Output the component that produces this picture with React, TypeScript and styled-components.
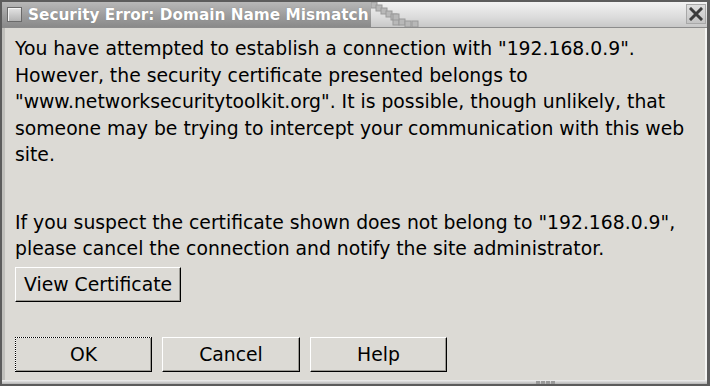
import React from "react";
import styled, { createGlobalStyle } from "styled-components";

const GlobalStyle = createGlobalStyle`
    html, body {
        margin: 0;
        padding: 0;
        background: #5c5c5c;
    }
    body {
        font-family: "DejaVu Sans", "Liberation Sans", sans-serif;
    }
`;

const Window = styled.div`
    width: 710px;
    height: 386px;
    box-sizing: border-box;
    display: flex;
    flex-direction: column;
    background: #5c5c5c;
    padding: 2px 3px 2px 2px;
`;

const TitleBar = styled.div`
    height: 25px;
    display: flex;
    align-items: stretch;
    background: linear-gradient(#f2f2f2, #dcdcdc 60%, #c8c8c8);
    border-bottom: 1px solid #8c8c8c;
`;

const TitleActive = styled.div`
    display: flex;
    align-items: center;
    gap: 6px;
    padding: 0 2px 0 5px;
    background: linear-gradient(#b8b8b8, #9c9c9c 55%, #8a8a8a);
`;

const MenuBox = styled.div`
    width: 15px;
    height: 15px;
    box-sizing: border-box;
    border: 1px solid #6a6a6a;
    background: linear-gradient(#e4e4e4, #b4b4b4);
    box-shadow: inset 1px 1px 0 #f4f4f4;
`;

const TitleText = styled.span`
    color: #ffffff;
    font-weight: bold;
    font-size: 15.3px;
    white-space: nowrap;
    text-shadow: 0 0 1px #7a7a7a;
`;

const TitleFill = styled.div`
    flex: 1;
`;

const CloseButton = styled.div`
    width: 20px;
    height: 20px;
    margin: 2px 1px 0 0;
    box-sizing: border-box;
    border: 1px solid #a8a8a8;
    background: linear-gradient(#dedede, #c4c4c4);
    display: flex;
    align-items: center;
    justify-content: center;
`;

const Body = styled.div`
    flex: 1;
    display: flex;
    flex-direction: column;
    background: #dcdad5;
    border-left: 3px solid #c0bfbb;
    border-right: 2px solid #f4f4f2;
    padding: 8px 10px 8px 10px;
    color: #000;
    font-size: 18.8px;
    line-height: 26.5px;
`;

const Paragraph = styled.p<{ $gap: number }>`
    margin: 0 0 ${(p) => p.$gap}px 0;
    white-space: nowrap;
`;

const Button = styled.button<{ $width?: number; $focused?: boolean }>`
    width: ${(p) => (p.$width ? `${p.$width}px` : "auto")};
    height: 35px;
    padding: 0 8px;
    font-family: "DejaVu Sans", "Liberation Sans", sans-serif;
    font-size: 18.8px;
    color: #000;
    background: #dcdad5;
    border: 1px solid;
    border-color: #ffffff #000000 #000000 #ffffff;
    box-shadow: inset -1px -1px 0 #9c9a94;
    outline: ${(p) => (p.$focused ? "1px dotted #000" : "none")};
    outline-offset: -1px;
`;

const CertRow = styled.div`
    display: flex;
    margin-top: 4px;
`;

const ButtonRow = styled.div`
    display: flex;
    gap: 10px;
    margin-top: auto;
`;

const BottomFrame = styled.div`
    height: 4px;
    display: flex;
    align-items: center;
    justify-content: flex-start;
    background: linear-gradient(#f0f0f0, #b4b4b4);
    padding-left: 534px;
`;

const Grip = styled.div`
    display: flex;
    gap: 1px;
    span {
        width: 4px;
        height: 3px;
        background: #9a9a9a;
        border: 0;
    }
`;

const Stairs = () => (
    <svg width="60" height="25" viewBox="0 0 60 25">
        <defs>
            <linearGradient id="fade" x1="0" y1="0" x2="0" y2="1">
                <stop offset="0" stopColor="#f2f2f2" />
                <stop offset="0.6" stopColor="#dcdcdc" />
                <stop offset="1" stopColor="#c8c8c8" />
            </linearGradient>
        </defs>
        <rect x="0" y="0" width="60" height="25" fill="url(#fade)" />
        {[
            [0, 0],
            [5, 3],
            [10, 6],
            [15, 9],
            [20, 12],
            [22, 17],
            [28, 17],
            [22, 12],
            [34, 19],
            [41, 19],
        ].map(([x, y], i) => (
            <rect
                key={i}
                x={x}
                y={y}
                width="6"
                height="6"
                fill="#b8b8b8"
                stroke="#9a9a9a"
                strokeWidth="1"
            />
        ))}
    </svg>
);

const App = () => {
    return (
        <>
            <GlobalStyle />
            <Window>
                <TitleBar>
                    <TitleActive>
                        <MenuBox />
                        <TitleText>Security Error: Domain Name Mismatch</TitleText>
                    </TitleActive>
                    <Stairs />
                    <TitleFill />
                    <CloseButton>
                        <svg width="14" height="14" viewBox="0 0 14 14">
                            <path
                                d="M2 2 L12 12 M12 2 L2 12"
                                stroke="#3c3c3c"
                                strokeWidth="3"
                                strokeLinecap="square"
                            />
                        </svg>
                    </CloseButton>
                </TitleBar>
                <Body>
                    <Paragraph $gap={41}>
                        You have attempted to establish a connection with "192.168.0.9".
                        <br />
                        However, the security certificate presented belongs to
                        <br />
                        "www.networksecuritytoolkit.org". It is possible, though unlikely, that
                        <br />
                        someone may be trying to intercept your communication with this web
                        <br />
                        site.
                    </Paragraph>
                    <Paragraph $gap={0}>
                        If you suspect the certificate shown does not belong to "192.168.0.9",
                        <br />
                        please cancel the connection and notify the site administrator.
                    </Paragraph>
                    <CertRow>
                        <Button>View Certificate</Button>
                    </CertRow>
                    <ButtonRow>
                        <Button $width={137} $focused>
                            OK
                        </Button>
                        <Button $width={138}>Cancel</Button>
                        <Button $width={137}>Help</Button>
                    </ButtonRow>
                </Body>
                <BottomFrame>
                    <Grip>
                        <span />
                        <span />
                        <span />
                        <span />
                    </Grip>
                </BottomFrame>
            </Window>
        </>
    );
};

export default App;
